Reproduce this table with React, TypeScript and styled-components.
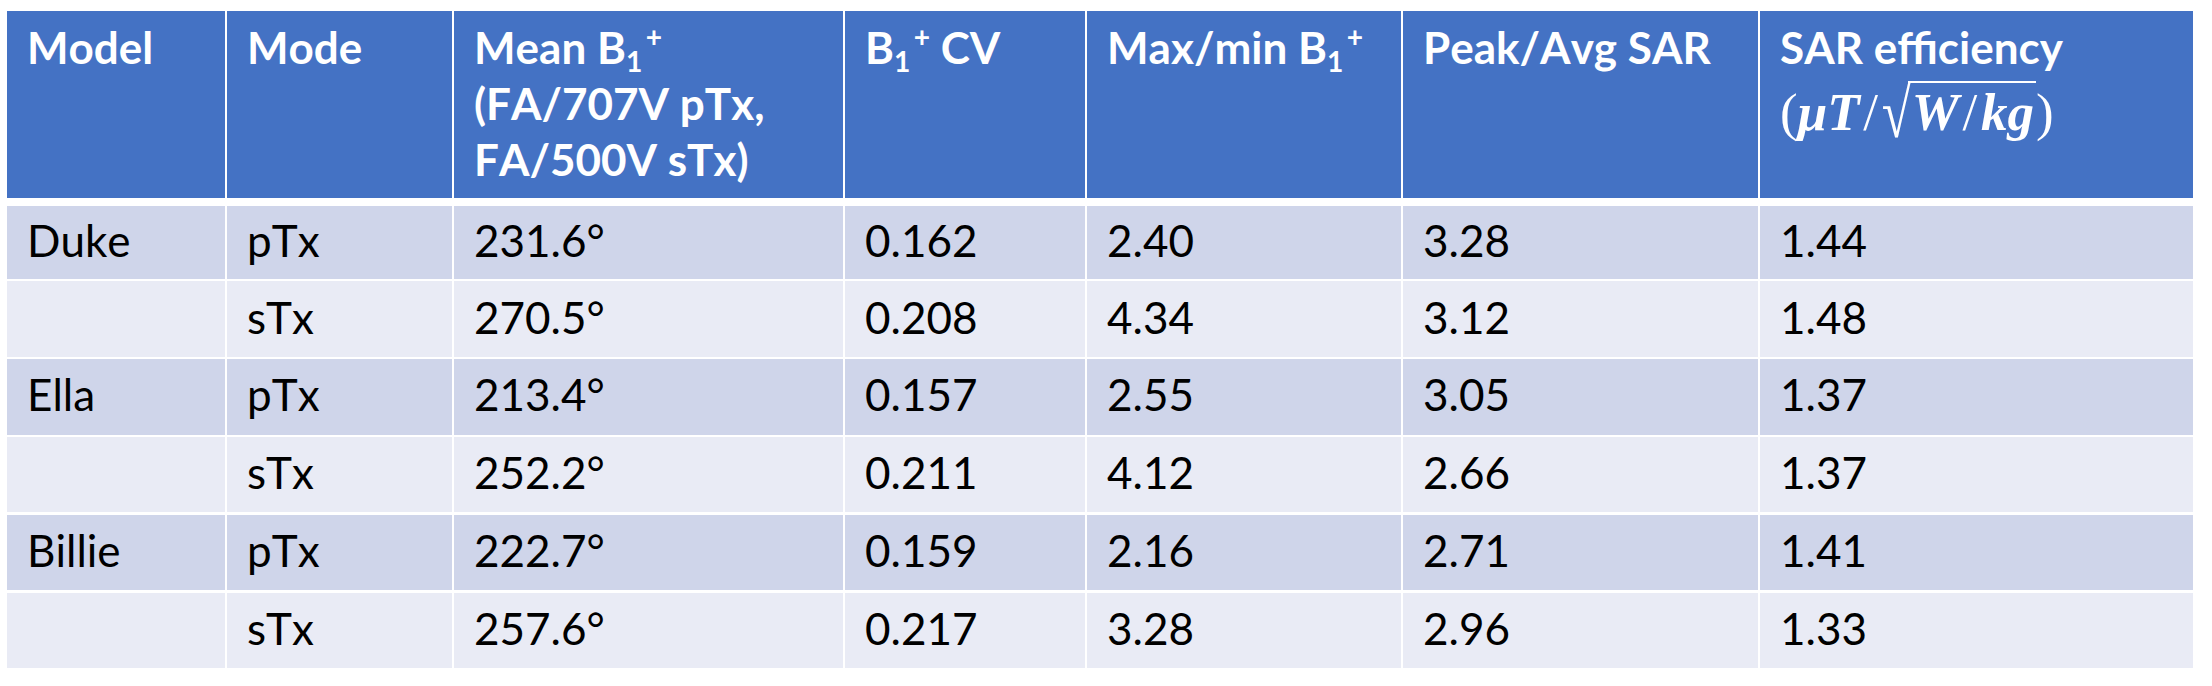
import styled, { createGlobalStyle } from "styled-components";

const GlobalStyle = createGlobalStyle`
  body {
    margin: 0;
    background: #ffffff;
  }
`;

const COLUMNS = "218px 225px 389px 240px 314px 355px 433px";

type Row = {
  model: string;
  mode: string;
  mean: string;
  cv: string;
  maxMin: string;
  peakAvg: string;
  efficiency: string;
};

const rows: Row[] = [
  { model: "Duke", mode: "pTx", mean: "231.6°", cv: "0.162", maxMin: "2.40", peakAvg: "3.28", efficiency: "1.44" },
  { model: "", mode: "sTx", mean: "270.5°", cv: "0.208", maxMin: "4.34", peakAvg: "3.12", efficiency: "1.48" },
  { model: "Ella", mode: "pTx", mean: "213.4°", cv: "0.157", maxMin: "2.55", peakAvg: "3.05", efficiency: "1.37" },
  { model: "", mode: "sTx", mean: "252.2°", cv: "0.211", maxMin: "4.12", peakAvg: "2.66", efficiency: "1.37" },
  { model: "Billie", mode: "pTx", mean: "222.7°", cv: "0.159", maxMin: "2.16", peakAvg: "2.71", efficiency: "1.41" },
  { model: "", mode: "sTx", mean: "257.6°", cv: "0.217", maxMin: "3.28", peakAvg: "2.96", efficiency: "1.33" },
];

const B1 = () => (
  <>
    B<Sub>1</Sub>
    <Sup>+</Sup>
  </>
);

export default function App() {
  return (
    <Page>
      <GlobalStyle />
      <Table>
        <HeadRow>
          <HeadCell>Model</HeadCell>
          <HeadCell>Mode</HeadCell>
          <HeadCell>
            Mean <B1 />
            <br />
            (FA/707V pTx,
            <br />
            FA/500V sTx)
          </HeadCell>
          <HeadCell>
            <B1 /> CV
          </HeadCell>
          <HeadCell>
            Max/min <B1 />
          </HeadCell>
          <HeadCell>Peak/Avg SAR</HeadCell>
          <HeadCell>
            SAR efficiency
            <Formula>
              <Upright>(</Upright>μT<Slash>/</Slash>
              <Root>√</Root>
              <Radicand>
                W<Slash>/</Slash>kg
              </Radicand>
              <Upright>)</Upright>
            </Formula>
          </HeadCell>
        </HeadRow>
        <Body>
          {rows.map((r, i) => {
            const band = i % 2 === 0 ? "dark" : "light";
            return [
              <Cell key={`a${i}`} $band={band}>{r.model}</Cell>,
              <Cell key={`b${i}`} $band={band}>{r.mode}</Cell>,
              <Cell key={`c${i}`} $band={band}>{r.mean}</Cell>,
              <Cell key={`d${i}`} $band={band}>{r.cv}</Cell>,
              <Cell key={`e${i}`} $band={band}>{r.maxMin}</Cell>,
              <Cell key={`f${i}`} $band={band}>{r.peakAvg}</Cell>,
              <Cell key={`g${i}`} $band={band}>{r.efficiency}</Cell>,
            ];
          })}
        </Body>
      </Table>
    </Page>
  );
}

const Page = styled.div`
  padding: 11px 0 0 7px;
  font-family: Lato, "Open Sans", sans-serif;
  font-kerning: none;
`;

const Table = styled.div`
  display: flex;
  flex-direction: column;
  gap: 8px;
  width: 2186px;
`;

const HeadRow = styled.div`
  display: grid;
  grid-template-columns: ${COLUMNS};
  column-gap: 2px;
  height: 187px;
`;

const HeadCell = styled.div`
  background: #4472c4;
  color: #ffffff;
  font-weight: 700;
  font-size: 44px;
  line-height: 56px;
  padding: 8px 10px 0 20px;
  white-space: nowrap;
`;

const Sub = styled.span`
  font-size: 0.64em;
  position: relative;
  top: 0.3em;
  line-height: 0;
`;

const Sup = styled.span`
  font-size: 0.64em;
  position: relative;
  top: -0.62em;
  line-height: 0;
  margin-left: 0.12em;
`;

const Formula = styled.div`
  margin-top: 6px;
  font-family: "Liberation Serif", "DejaVu Serif", serif;
  font-style: italic;
  font-weight: 700;
  font-size: 53px;
  line-height: 58px;
`;

const Upright = styled.span`
  font-style: normal;
  font-weight: 400;
`;

const Slash = styled.span`
  font-style: normal;
  font-weight: 400;
  margin: 0 0.07em;
`;

const Root = styled.span`
  display: inline-block;
  font-style: normal;
  font-weight: 400;
  transform: scaleY(1.32) translateY(1px);
  margin-right: -3px;
`;

const Radicand = styled.span`
  display: inline-block;
  border-top: 2px solid #ffffff;
  line-height: 52px;
  padding: 3px 2px 0 4px;
`;

const Body = styled.div`
  display: grid;
  grid-template-columns: ${COLUMNS};
  grid-template-rows: 73px repeat(5, 75.4px);
  gap: 2.4px 2px;
`;

const Cell = styled.div<{ $band: "dark" | "light" }>`
  display: flex;
  align-items: center;
  padding: 0 10px 4px 20px;
  background: ${(p) => (p.$band === "dark" ? "#cfd5ea" : "#e9ebf5")};
  color: #000000;
  font-size: 44px;
  line-height: 1.2;
`;
